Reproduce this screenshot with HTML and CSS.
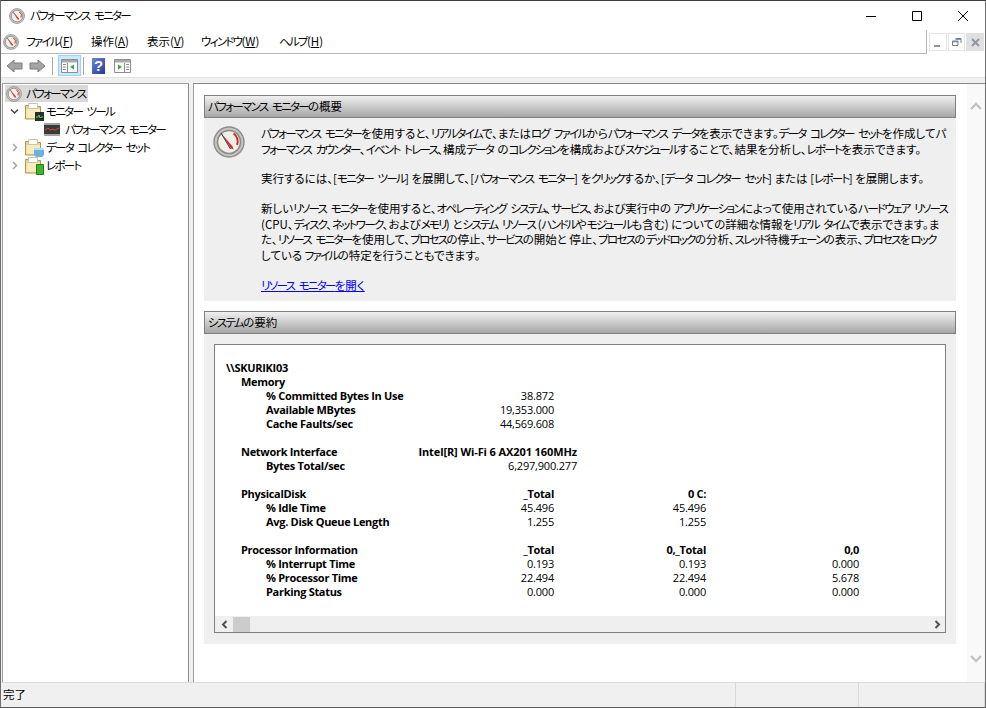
FILE: index.html
```html
<!DOCTYPE html>
<html lang="ja">

<head>
  <title>パフォーマンス モニター</title>
  <link rel="stylesheet" href="styles.css">
</head>

<body>
  <svg class="defs" width="0" height="0">
    <defs>
      <symbol id="gauge" viewBox="0 0 32 32">
        <circle cx="16" cy="16" r="15" fill="#c6c4c0" stroke="#8b8c8e" stroke-width="1.400"/>
        <circle cx="16" cy="16" r="11.500" fill="#f2efe9" stroke="#8f8b86" stroke-width="1.600"/>
        <path d="M20.500 7.500a9.500 9.500 0 0 1 3.500 11.500" fill="none" stroke="#c8342c" stroke-width="2"/>
        <path d="M8 7l10 15.500 2.500 1-1-3z" fill="#d4261f"/>
        <path d="M8 7l9.500 16" stroke="#3a3a3a" stroke-width="1"/>
      </symbol>
      <symbol id="folder" viewBox="0 0 17 17">
        <path d="M.500 2.500h5l1 1h9v12.500H.500z" fill="#eed48a" stroke="#b2975a"/>
        <path d="M3.500 .500h9v5h-9z" fill="#ffffff" stroke="#c9c2ae"/>
        <path d="M1.500 6h13.500v9H1.500z" fill="#f8ecbf"/>
      </symbol>
    </defs>
  </svg>

  <div class="window">
    <div class="titlebar">
      <svg class="app-icon"><use href="#gauge"/></svg>
      <span class="title-text kt">パフォーマンス モニター</span>
      <div class="window-buttons">
        <svg width="46" height="30" viewBox="0 0 46 30"><path d="M18 15.500h10" stroke="#000"/></svg>
        <svg width="46" height="30" viewBox="0 0 46 30"><path d="M18.500 10.500h9v9h-9z" fill="none" stroke="#000"/></svg>
        <svg width="46" height="30" viewBox="0 0 46 30"><path d="M18 10l10 10M28 10L18 20" stroke="#000" fill="none"/></svg>
      </div>
    </div>

    <div class="menubar">
      <div class="menu-left">
        <svg class="app-icon menu-icon"><use href="#gauge"/></svg>
        <span class="menu-item menu-file"><span class="kt">ファイル</span>(<u>F</u>)</span>
        <span class="menu-item menu-action">操作(<u>A</u>)</span>
        <span class="menu-item menu-view">表示(<u>V</u>)</span>
        <span class="menu-item menu-window"><span class="kt">ウィンドウ</span>(<u>W</u>)</span>
        <span class="menu-item"><span class="kt">ヘルプ</span>(<u>H</u>)</span>
      </div>
      <div class="mdi-buttons">
        <span class="mdi-btn"><svg width="9" height="9" viewBox="0 0 9 9"><path d="M1 7h6v2H1z" fill="#8a97a6"/></svg></span>
        <span class="mdi-btn"><svg width="10" height="9" viewBox="0 0 10 9"><path d="M3.500.500h5.500v4.500M.500 3h5.500v4.500H.500zM.500 3.800h5.500M3.500 1.300H9" fill="none" stroke="#6f7d8c"/></svg></span>
        <span class="mdi-btn mdi-close"><svg width="9" height="9" viewBox="0 0 9 9"><path d="M1 1l7 7M8 1L1 8" stroke="#8a97a6" stroke-width="2"/></svg></span>
      </div>
    </div>

    <div class="toolbar">
      <svg class="tool" width="17" height="14" viewBox="0 0 17 14"><path d="M1 7l7-6v3h8v6H8v3z" fill="#a4a4a4" stroke="#7c7c7c"/></svg>
      <svg class="tool tool-fwd" width="17" height="14" viewBox="0 0 17 14"><path d="M16 7L9 1v3H1v6h8v3z" fill="#a4a4a4" stroke="#7c7c7c"/></svg>
      <span class="tool-sep"></span>
      <span class="tool-active">
        <svg width="17" height="14" viewBox="0 0 17 14"><path d="M.500.500h16v13H.500z" fill="#fff" stroke="#8d8d8d"/><path d="M1 1h15v2.500H1z" fill="#a9a9a9"/><path d="M6.500 4v9" stroke="#8d8d8d"/><path d="M2 5.500h3M2 8h3M2 10.500h3" stroke="#8d8d8d"/><path d="M13 5.500v5L9 8z" fill="#3aa33a"/></svg>
      </span>
      <span class="tool-sep tool-sep-tight"></span>
      <span class="tool-help">?</span>
      <svg class="tool-panel" width="17" height="14" viewBox="0 0 17 14"><path d="M.500.500h16v13H.500z" fill="#fff" stroke="#8d8d8d"/><path d="M1 1h15v2.500H1z" fill="#a9a9a9"/><path d="M10.500 4v9" stroke="#8d8d8d"/><path d="M12 5.500h3M12 8h3M12 10.500h3" stroke="#8d8d8d"/><path d="M4 5.500v5L8 8z" fill="#3aa33a"/></svg>
    </div>

    <div class="panes">
      <div class="tree">
        <div class="tree-row tree-root">
          <div class="tree-selected">
            <svg class="tree-gauge"><use href="#gauge"/></svg>
            <span class="kt">パフォーマンス</span>
          </div>
        </div>
        <div class="tree-row">
          <svg class="twist" width="9" height="9" viewBox="0 0 9 9"><path d="M1 2.500l3.500 3.500L8 2.500" fill="none" stroke="#444" stroke-width="1.500"/></svg>
          <span class="tree-icon">
            <svg width="17" height="17"><use href="#folder"/></svg>
            <svg class="badge" width="9" height="9" viewBox="0 0 9 9"><path d="M0 0h9v9H0z" fill="#27302c"/><path d="M1 5h2l1-2 1 3 1-1h2" fill="none" stroke="#5fd04f"/></svg>
          </span>
          <span class="kt">モニター ツール</span>
        </div>
        <div class="tree-row tree-child">
          <svg width="16" height="13" viewBox="0 0 16 13"><path d="M0 0h16v13H0z" fill="#3a3a3c"/><path d="M0 0h16v2H0zM0 11h16v2H0z" fill="#a4a4a4"/><path d="M1 7l3-2 2 2 3-1 2 1 4-2" fill="none" stroke="#e2453c"/></svg>
          <span class="kt">パフォーマンス モニター</span>
        </div>
        <div class="tree-row">
          <svg class="twist" width="9" height="9" viewBox="0 0 9 9"><path d="M3 1l3.500 3.500L3 8" fill="none" stroke="#a6a6a6" stroke-width="1.500"/></svg>
          <span class="tree-icon">
            <svg width="17" height="17"><use href="#folder"/></svg>
            <svg class="badge" width="10" height="9" viewBox="0 0 10 9"><path d="M0 2h10v5l-2 2H2L0 7z" fill="#6cb2dc"/><path d="M0 0h10v2H0z" fill="#b5dff2"/></svg>
          </span>
          <span class="kt">データ コレクター セット</span>
        </div>
        <div class="tree-row">
          <svg class="twist" width="9" height="9" viewBox="0 0 9 9"><path d="M3 1l3.500 3.500L3 8" fill="none" stroke="#a6a6a6" stroke-width="1.500"/></svg>
          <span class="tree-icon">
            <svg width="17" height="17"><use href="#folder"/></svg>
            <svg class="badge" width="8" height="11" viewBox="0 0 8 11"><path d="M.500.500h7v10h-7z" fill="#3db52e" stroke="#1f7a1a"/></svg>
          </span>
          <span class="kt">レポート</span>
        </div>
      </div>

      <div class="content">
        <div class="content-inner">
          <div class="section-head"><span class="kt">パフォーマンス モニター</span>の概要</div>
          <div class="section-body overview">
            <svg class="overview-icon"><use href="#gauge"/></svg>
            <div class="overview-text">
              <p><span class="kt">パフォーマンス モニター</span>を使用すると、<span class="kt">リアルタイム</span>で、または<span class="kt">ログ ファイル</span>から<span class="kt">パフォーマンス データ</span>を表示できます。<span class="kt">データ コレクター セット</span>を作成して<span class="kt">パ</span><br><span class="kt">フォーマンス カウンター</span>、<span class="kt">イベント トレース</span>、構成<span class="kt">データ </span>の<span class="kt">コレクション</span>を構成および<span class="kt">スケジュール</span>することで、結果を分析し、<span class="kt">レポート</span>を表示できます。</p>
              <p>実行するには、[<span class="kt">モニター ツール</span>] を展開して、[<span class="kt">パフォーマンス モニター</span>] を<span class="kt">クリック</span>するか、[<span class="kt">データ コレクター セット</span>] または [<span class="kt">レポート</span>] を展開します。</p>
              <p>新しい<span class="kt">リソース モニター</span>を使用すると、<span class="kt">オペレーティング システム</span>、<span class="kt">サービス</span>、および実行中の <span class="kt">アプリケーション</span>によって使用されている<span class="kt">ハードウェア リソース</span><br>(CPU、<span class="kt">ディスク</span>、<span class="kt">ネットワーク</span>、および<span class="kt">メモリ</span>) と<span class="kt">システム リソース</span> (<span class="kt">ハンドル</span>や<span class="kt">モジュール</span>も含む) についての詳細な情報を<span class="kt">リアル タイム</span>で表示できます。ま<br>た、<span class="kt">リソース モニター</span>を使用して、<span class="kt">プロセス</span>の停止、<span class="kt">サービス</span>の開始と 停止、<span class="kt">プロセス</span>の<span class="kt">デッドロック</span>の分析、<span class="kt">スレッド</span>待機<span class="kt">チェーン</span>の表示、<span class="kt">プロセス</span>を<span class="kt">ロック</span><br>している <span class="kt">ファイル</span>の特定を行うこともできます。</p>
              <p><a class="link" href="#"><span class="kt">リソース モニター</span>を開く</a></p>
            </div>
          </div>

          <div class="section-head section-second"><span class="kt">システム</span>の要約</div>
          <div class="section-body summary">
            <div class="report">
              <div class="report-data">
                <div class="row">\\SKURIKI03</div>
                <div class="row lv1"><span>Memory</span></div>
                <div class="row lv2"><span>% Committed Bytes In Use</span><span>38.872</span></div>
                <div class="row lv2"><span>Available MBytes</span><span>19,353.000</span></div>
                <div class="row lv2"><span>Cache Faults/sec</span><span>44,569.608</span></div>
                <div class="row"></div>
                <div class="row lv1 row-wide"><span>Network Interface</span><span>Intel[R] Wi-Fi 6 AX201 160MHz</span></div>
                <div class="row lv2 row-wide"><span>Bytes Total/sec</span><span>6,297,900.277</span></div>
                <div class="row"></div>
                <div class="row lv1"><span>PhysicalDisk</span><span>_Total</span><span>0 C:</span></div>
                <div class="row lv2"><span>% Idle Time</span><span>45.496</span><span>45.496</span></div>
                <div class="row lv2"><span>Avg. Disk Queue Length</span><span>1.255</span><span>1.255</span></div>
                <div class="row"></div>
                <div class="row lv1"><span>Processor Information</span><span>_Total</span><span>0,_Total</span><span>0,0</span></div>
                <div class="row lv2"><span>% Interrupt Time</span><span>0.193</span><span>0.193</span><span>0.000</span></div>
                <div class="row lv2"><span>% Processor Time</span><span>22.494</span><span>22.494</span><span>5.678</span></div>
                <div class="row lv2"><span>Parking Status</span><span>0.000</span><span>0.000</span><span>0.000</span></div>
              </div>
              <div class="hscroll">
                <svg width="7" height="9" viewBox="0 0 7 9"><path d="M5.500 1L2 4.500 5.500 8" fill="none" stroke="#505050" stroke-width="2"/></svg>
                <span class="hthumb"></span>
                <svg class="hright" width="7" height="9" viewBox="0 0 7 9"><path d="M1.500 1L5 4.500 1.500 8" fill="none" stroke="#505050" stroke-width="2"/></svg>
              </div>
            </div>
          </div>
        </div>
        <div class="vscroll">
          <svg width="12" height="8" viewBox="0 0 12 8"><path d="M1 7l5-5 5 5" fill="none" stroke="#c4c4c4" stroke-width="2.400"/></svg>
          <svg width="12" height="8" viewBox="0 0 12 8"><path d="M1 1l5 5 5-5" fill="none" stroke="#c4c4c4" stroke-width="2.400"/></svg>
        </div>
      </div>
    </div>

    <div class="statusbar">
      <span class="status-main">完了</span>
      <span class="status-cell status-a"></span>
      <span class="status-cell status-b"></span>
    </div>
  </div>
</body>

</html>
```

FILE: styles.css
```css
* {
  box-sizing: border-box;
}

html,
body {
  margin: 0;
  padding: 0;
  height: 100%;
  overflow: hidden;
}

body {
  font-family: "Noto Sans CJK JP", "Noto Sans", sans-serif;
  font-size: 11.500px;
  font-feature-settings: "palt";
  color: #000000;
  background-color: #ffffff;
}

/* Katakana is much narrower than kanji in the original UI font */
.kt {
  letter-spacing: -1.700px;
  word-spacing: 3.500px;
}

.defs {
  display: block;
  height: 0;
}

.window {
  width: 986px;
  height: 708px;
  display: flex;
  flex-direction: column;
  border-top: 1px solid #3c3c3c;
  border-left: 1px solid #6e6e6e;
  border-right: 1px solid #6e6e6e;
  border-bottom: 1px solid #5a5a5a;
}

/* Title bar */
.titlebar {
  height: 29px;
  flex: none;
  display: flex;
  align-items: center;
  padding-left: 8px;
}

.app-icon {
  width: 16px;
  height: 16px;
  flex: none;
}

.title-text {
  margin-left: 5px;
  margin-bottom: 2px;
}

.window-buttons {
  margin-left: auto;
  display: flex;
  margin-right: -1px;
}

/* Menu */
.menubar {
  height: 24px;
  flex: none;
  display: flex;
  align-items: stretch;
}

.menu-left {
  flex: 1;
  display: flex;
  align-items: center;
  padding-left: 2px;
  border-bottom: 1px solid #b5b5bb;
  border-right: 1px solid #b5b5bb;
  margin-right: 1px;
}

.menu-item {
  width: 54px;
  flex: none;
  margin-bottom: 1px;
}

.menu-icon {
  margin-right: 7px;
}

.menu-file {
  width: 65px;
}

.menu-action {
  width: 56px;
}

.menu-window {
  width: 78px;
}

.mdi-buttons {
  display: flex;
  gap: 1px;
  width: 57px;
  padding: 3px 1px 2px 1px;
}

.mdi-btn {
  width: 18px;
  height: 18px;
  border: 1px solid #e4e4e4;
  display: flex;
  align-items: center;
  justify-content: center;
}

.mdi-close {
  background-color: #e0e0e0;
  border-color: #e0e0e0;
}

/* Toolbar */
.toolbar {
  height: 24px;
  flex: none;
  display: flex;
  align-items: center;
  padding-left: 5px;
  border-bottom: 1px solid #e2e2e2;
}

.tool-fwd {
  margin-left: 6px;
}

.tool-sep {
  width: 1px;
  height: 18px;
  margin: 0 5px 0 6px;
  background-color: #a9a9a9;
}

.tool-sep-tight {
  margin: 0 0 0 2px;
}

.tool-active {
  width: 23px;
  height: 21px;
  display: flex;
  align-items: center;
  justify-content: center;
  background-color: #cce8ff;
  border: 1px solid #99d1ff;
}

.tool-help {
  width: 13px;
  height: 16px;
  margin-left: 8px;
  background-image: linear-gradient(135deg, #6f86dc, #23389c);
  color: #ffffff;
  font-family: "Liberation Sans", sans-serif;
  font-size: 15px;
  font-weight: 700;
  line-height: 16px;
  text-align: center;
}

.tool-panel {
  margin-left: 9px;
}

/* Panes */
.panes {
  flex: 1;
  min-height: 0;
  display: flex;
  padding: 5px 0 0 1px;
  background-color: #f0f0f0;
}

.tree {
  width: 187px;
  background-color: #ffffff;
  border-top: 1px solid #a0a0a0;
  border-right: 1px solid #8c8c8c;
  border-left: 1px solid #a0a0a0;
}

.tree-row {
  height: 18px;
  display: flex;
  align-items: center;
  padding-left: 7px;
}

.tree-root {
  padding-left: 2px;
  align-items: flex-end;
}

.tree-selected {
  display: flex;
  align-items: center;
  gap: 4px;
  height: 17px;
  padding: 0 3px 0 1px;
  background-color: #d9d9d9;
}

.tree-selected span {
  margin-bottom: 2px;
}

.tree-gauge {
  width: 16px;
  height: 16px;
  flex: none;
}

.twist {
  flex: none;
  margin-right: 6px;
}

.tree-icon {
  position: relative;
  width: 17px;
  height: 17px;
  margin-right: 4px;
  flex: none;
}

.badge {
  position: absolute;
  right: -2px;
  bottom: -1px;
}

.tree-child {
  padding-left: 41px;
  gap: 5px;
}

/* Right pane */
.content {
  margin-left: 4px;
  flex: 1;
  display: flex;
  background-color: #ffffff;
  border-top: 1px solid #8a8a8a;
  border-left: 1px solid #a0a0a0;
}

.content-inner {
  width: 773px;
  padding: 11px 0 0 10px;
}

.section-head {
  width: 752px;
  height: 23px;
  padding-left: 3px;
  line-height: 20px;
  border: 1px solid #7f7f7f;
  background-image: linear-gradient(#f0f0f0, #a6a6a6);
}

.section-second {
  margin-top: 10px;
}

.section-body {
  width: 752px;
  background-color: #efefef;
}

.overview {
  height: 183px;
  display: flex;
  padding: 8px 0 0 9px;
}

.overview-icon {
  width: 32px;
  height: 32px;
  flex: none;
}

.overview-text {
  margin-left: 16px;
  white-space: nowrap;
  line-height: 15.500px;
}

.overview-text p {
  margin: 0 0 14.400px 0;
}

.link {
  color: #0000ff;
}

.summary {
  height: 310px;
  padding: 10px 10px 0 10px;
}

.report {
  height: 289px;
  display: flex;
  flex-direction: column;
  background-color: #ffffff;
  border: 1px solid #7f7f7f;
}

.report-data {
  flex: 1;
  padding: 16px 0 0 11px;
  font-family: "Open Sans", "Noto Sans", sans-serif;
  font-size: 11px;
  font-weight: 700;
  font-feature-settings: normal;
  letter-spacing: -0.300px;
  line-height: 14px;
}

/* Each row is one line of counters: name, then right aligned instance columns */
.row {
  height: 14px;
  display: grid;
  grid-template-columns: 200px 128px 152px 153px;
  white-space: nowrap;
}

.row span + span {
  text-align: right;
}

.row-wide {
  grid-template-columns: 170px 181px;
}

.lv1 span:first-child {
  padding-left: 15px;
}

.lv1.row-wide span + span {
  letter-spacing: -0.100px;
}

.lv2 span:first-child {
  padding-left: 40px;
}

.lv2 span + span {
  font-weight: 400;
  letter-spacing: -0.200px;
}

.hscroll {
  height: 16px;
  flex: none;
  display: flex;
  align-items: center;
  background-color: #efefef;
  padding: 0 4px 0 6px;
}

.hthumb {
  width: 17px;
  height: 15px;
  margin-left: 5px;
  background-color: #cccccc;
}

.hright {
  margin-left: auto;
}

.vscroll {
  width: 18px;
  margin-left: auto;
  background-color: #f9f9f9;
  display: flex;
  flex-direction: column;
  justify-content: space-between;
  align-items: center;
  padding: 18px 0 19px 0;
}

/* Status bar */
.statusbar {
  height: 25px;
  flex: none;
  display: flex;
  background-color: #f0f0f0;
  border-top: 1px solid #dcdcdc;
  line-height: 23px;
}

.status-main {
  flex: 1;
  padding-left: 2px;
}

.status-cell {
  border-left: 1px solid #d9d9d9;
}

.status-a {
  width: 123px;
}

.status-b {
  width: 127px;
  border-right: 1px solid #d9d9d9;
}
```
